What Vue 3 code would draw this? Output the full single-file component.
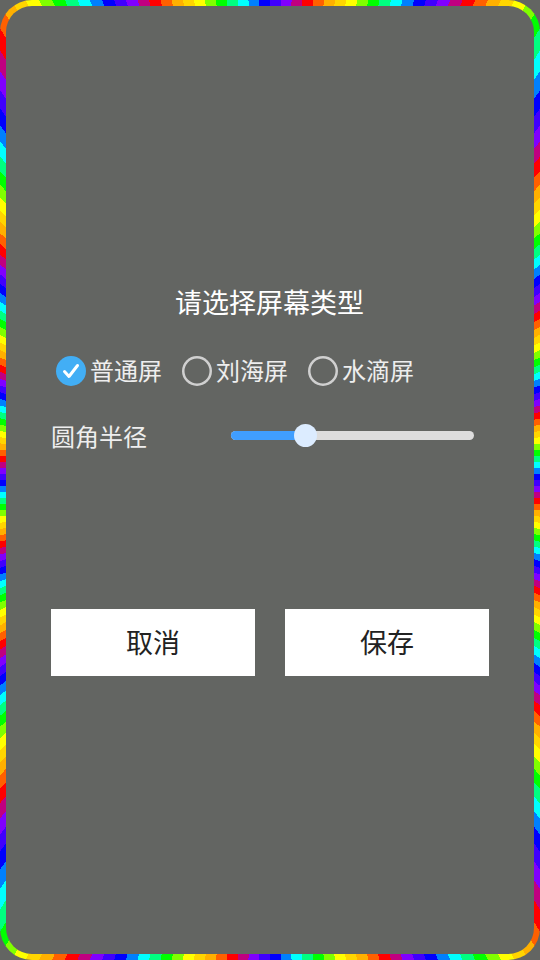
<script setup>
import { ref } from 'vue'
const title = '请选择屏幕类型'
const screens = ref([
  { name: '普通屏', checked: true },
  { name: '刘海屏', checked: false },
  { name: '水滴屏', checked: false },
])
</script>

<template>
  <div class="page">
    <div class="ring">
      <div class="panel">
        <h1 class="title">{{ title }}</h1>
        <div class="radios">
          <div v-for="s in screens" :key="s.name" class="radio">
            <span class="dot" :class="{ on: s.checked }">
              <svg v-if="s.checked" viewBox="0 0 30 30" width="30" height="30">
                <path d="M8.5 15.5 L13 20.5 L21.5 9.5" fill="none" stroke="#fff" stroke-width="3" stroke-linecap="round" stroke-linejoin="round" />
              </svg>
            </span>
            <span class="name">{{ s.name }}</span>
          </div>
        </div>
        <div class="row">
          <span class="label">圆角半径</span>
          <div class="track">
            <div class="fill"></div>
            <div class="thumb"></div>
          </div>
        </div>
        <div class="buttons">
          <button class="btn">取消</button>
          <button class="btn">保存</button>
        </div>
      </div>
    </div>
  </div>
</template>

<style>
html, body { margin: 0; background: #636562; }
</style>

<style scoped>
.page {
  width: 540px;
  height: 960px;
  background: #636562;
  font-family: "Noto Sans CJK SC", "Noto Sans", sans-serif;
}
.ring {
  box-sizing: border-box;
  width: 540px;
  height: 960px;
  padding: 6px;
  border-radius: 32px;
  background: repeating-conic-gradient(from 3.86deg at 50% 50%,
    #ff0000 0 1.2857deg,
    #ff6000 0 2.5714deg,
    #ffb000 0 3.8571deg,
    #ffd500 0 5.1428deg,
    #ffff00 0 6.4285deg,
    #80ff00 0 7.7142deg,
    #00ff00 0 9deg,
    #00ff80 0 10.2857deg,
    #00ffff 0 11.5714deg,
    #0080ff 0 12.8571deg,
    #0000ff 0 14.1428deg,
    #4000ff 0 15.4285deg,
    #8000ff 0 16.7142deg,
    #c00080 0 18deg);
}
.panel {
  box-sizing: border-box;
  height: 948px;
  padding: 277px 45px 0;
  border-radius: 26px;
  background: #636562;
  color: #eee;
}
.title {
  margin: 0;
  padding-right: 1px;
  font-size: 27px;
  font-weight: 400;
  line-height: 38px;
  text-align: center;
  color: #fff;
}
.radios {
  display: flex;
  gap: 20px;
  margin-top: 32px;
  padding-left: 5px;
  font-size: 24px;
  line-height: 34px;
}
.radio {
  display: flex;
  align-items: center;
  gap: 4px;
}
.name {
  padding-bottom: 2px;
}
.dot {
  width: 30px;
  height: 30px;
  border-radius: 50%;
  box-shadow: inset 0 0 0 2.5px #d0d0d0;
}
.dot.on {
  box-shadow: none;
  background: #42aef5;
}
.dot svg { display: block; }
.row {
  display: flex;
  align-items: center;
  margin-top: 29px;
  height: 34px;
}
.label {
  width: 180px;
  padding-top: 2px;
  font-size: 24px;
  line-height: 34px;
}
.track {
  position: relative;
  width: 243px;
  height: 9px;
  border-radius: 5px;
  background: #dddddd;
}
.fill {
  width: 75px;
  height: 9px;
  border-radius: 5px 0 0 5px;
  background: #409eff;
}
.thumb {
  position: absolute;
  left: 63px;
  top: -7px;
  width: 23px;
  height: 23px;
  border-radius: 50%;
  background: #dcecff;
}
.buttons {
  display: flex;
  gap: 30px;
  margin-top: 157px;
}
.btn {
  width: 204px;
  height: 67px;
  padding: 0 0 2px;
  border: 0;
  background: #fff;
  color: #222;
  font-family: inherit;
  font-size: 27px;
}
</style>
